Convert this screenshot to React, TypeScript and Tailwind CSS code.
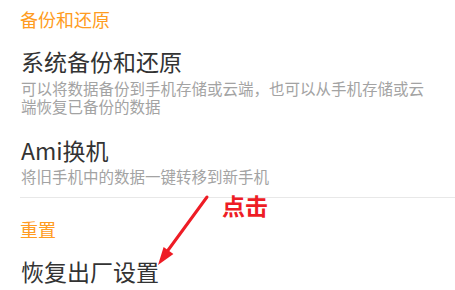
export default function App() {
  return (
    <div className="relative h-[290px] w-[455px] overflow-hidden bg-white font-['Noto_Sans_CJK_SC','Noto_Sans',sans-serif]">
      {/* Backup section */}
      <div className="pl-[20px] pt-[10px] text-[18px] leading-[18px] text-[#ff9c22]">
        备份和还原
      </div>
      <div className="pl-[21px]">
        <p className="mt-[22px] text-[23px] leading-[23px] text-[#333333]">
          系统备份和还原
        </p>
        <p className="mt-[6px] w-[410px] text-[15.5px] leading-[18px] text-[#a3a3a3]">
          可以将数据备份到手机存储或云端，也可以从手机存储或云端恢复已备份的数据
        </p>
        <p className="mt-[24px] text-[23px] leading-[23px] text-[#333333]">
          Ami换机
        </p>
        <p className="mt-[5px] text-[15.5px] leading-[18px] text-[#a3a3a3]">
          将旧手机中的数据一键转移到新手机
        </p>
      </div>
      <div className="ml-[20px] mt-[12px] h-px bg-[#e8e8e8]" />

      {/* Reset section */}
      <div className="pl-[20px] pt-[22px] text-[18px] leading-[18px] text-[#ff9c22]">
        重置
      </div>
      <p className="mt-[22px] pl-[21px] text-[23px] leading-[23px] text-[#333333]">
        恢复出厂设置
      </p>

      {/* Annotation */}
      <span className="absolute left-[222px] top-[194px] text-[23px] font-bold leading-[23px] text-[#ee1c25]">
        点击
      </span>
      <svg className="pointer-events-none absolute inset-0" width="455" height="290">
        <line x1="207" y1="197" x2="166" y2="253" stroke="#ee1c25" strokeWidth="3" strokeLinecap="round" />
        <polygon points="158,265 163.6,246.9 173.4,253.9" fill="#ee1c25" />
      </svg>
    </div>
  );
}
